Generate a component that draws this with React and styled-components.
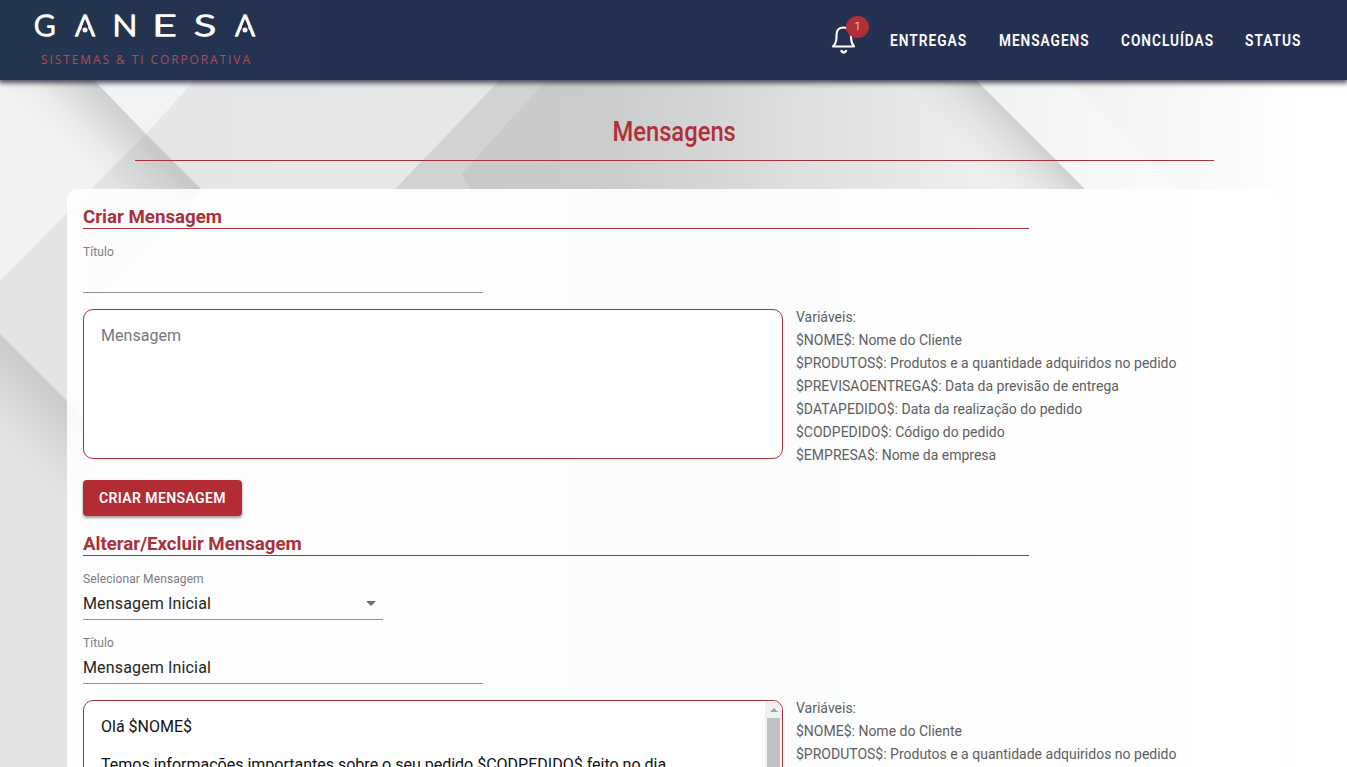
import React from "react";
import styled, { createGlobalStyle } from "styled-components";

const RED = "#a9313a";

const GlobalStyle = createGlobalStyle`
  * { box-sizing: border-box; }
  body { margin: 0; background: #fff; font-family: Roboto, sans-serif; }
  h1, h2, p { margin: 0; }
`;

const Page = styled.div`
  position: relative;
  height: 767px;
  overflow: hidden;
`;

const Backdrop = styled.svg`
  position: absolute;
  inset: 0;
`;

const Header = styled.header`
  position: relative;
  display: flex;
  align-items: center;
  justify-content: space-between;
  height: 80px;
  padding: 0 46px 0 30px;
  background: linear-gradient(90deg, #24364e 0%, #243350 12%, #253153 24%, #253154 100%);
  box-shadow: 0 2px 5px 1px rgba(20, 22, 50, 0.75);
`;

const Nav = styled.nav`
  display: flex;
  align-items: center;
  height: 80px;
`;

const NavLink = styled.a`
  width: ${(p) => p.$width}px;
  margin-left: ${(p) => p.$gap || 32}px;
  color: #fff;
  font-size: 17px;
  font-weight: 600;
  line-height: 24px;
  letter-spacing: 1.2px;
  white-space: nowrap;
`;

const Squeezed = styled.span`
  display: inline-block;
  transform: scaleX(${(p) => p.$ratio});
  transform-origin: ${(p) => p.$origin || "left"} center;
`;

const BellButton = styled.div`
  position: relative;
  width: 26px;
  height: 30px;
  svg { display: block; }
`;

const Badge = styled.span`
  position: absolute;
  left: 15px;
  top: -9px;
  width: 23px;
  height: 22px;
  border-radius: 50%;
  background: #b12f37;
  color: #fff;
  font-size: 11px;
  font-weight: 300;
  line-height: 22px;
  text-align: center;
`;

const Main = styled.main`
  position: relative;
`;

const Title = styled.h1`
  width: 1079px;
  height: 81px;
  margin: 0 auto 28px 135px;
  padding-top: 33px;
  border-bottom: 1px solid ${RED};
  color: #b12f37;
  font-size: 27px;
  font-weight: 500;
  line-height: 38px;
  text-align: center;
`;

const Card = styled.section`
  width: 1213px;
  height: 700px;
  margin-left: 67px;
  padding: 16px;
  border-radius: 10px;
  background: rgba(255, 255, 255, 0.9);
`;

const SectionTitle = styled.h2`
  width: 946px;
  height: 24px;
  border-bottom: 1px solid ${RED};
  color: #ac3039;
  font-size: 18.7px;
  font-weight: 700;
  line-height: 24px;
  letter-spacing: ${(p) => p.$spacing}px;
`;

const Field = styled.div`
  width: ${(p) => p.$width}px;
  height: 48px;
  margin: 16px 0;
  border-bottom: 1px solid #8f8d92;
`;

const Label = styled.div`
  color: #7d7c80;
  font-size: 12px;
  line-height: 14px;
  letter-spacing: 0.1px;
`;

const Value = styled.div`
  display: flex;
  justify-content: space-between;
  align-items: center;
  height: 33px;
  padding-top: 1px;
  color: #252528;
  font-size: 16px;
  letter-spacing: 0.15px;
`;

const Caret = styled.span`
  margin-right: 7px;
  border: 5px solid transparent;
  border-top-color: #6e6e70;
  border-bottom: 0;
`;

const EditorRow = styled.div`
  display: flex;
  gap: 13px;
  height: 150px;
`;

const Editor = styled.div`
  display: flex;
  justify-content: space-between;
  width: 700px;
  height: 150px;
  overflow: hidden;
  border: 1px solid ${RED};
  border-radius: 10px;
  background: #fff;
  color: ${(p) => (p.$placeholder ? "#77777b" : "#111")};
  font-size: 16px;
  line-height: 19px;
  letter-spacing: ${(p) => (p.$placeholder ? 0.05 : 0)}px;
`;

const EditorText = styled.div`
  padding: 16px 17px;
  white-space: pre;
`;

const Scrollbar = styled.div`
  display: flex;
  flex-direction: column;
  align-items: center;
  width: 17px;
  background: #f1f1f1;
`;

const ScrollUp = styled.span`
  margin: 7px 0 6px;
  border: 4px solid transparent;
  border-top: 0;
  border-bottom-color: #a0a0a0;
`;

const ScrollThumb = styled.span`
  width: 13px;
  height: 110px;
  background: #c1c1c1;
`;

const Variables = styled.div`
  padding-top: 3px;
  margin-top: -6px;
  color: #5f5f62;
  font-size: 14px;
  line-height: 23px;
  white-space: nowrap;
`;

const Button = styled.button`
  display: block;
  width: 159px;
  height: 36px;
  margin: 21px 0 16px;
  padding: 0;
  border: 0;
  border-radius: 4px;
  background: #b32c34;
  box-shadow: 0 2px 3px rgba(0, 0, 0, 0.38);
  color: #fff;
  font: 600 14px/34px Roboto, sans-serif;
  letter-spacing: 0.4px;
`;

const VARIABLES = [
  "Variáveis:",
  "$NOME$: Nome do Cliente",
  "$PRODUTOS$: Produtos e a quantidade adquiridos no pedido",
  "$PREVISAOENTREGA$: Data da previsão de entrega",
  "$DATAPEDIDO$: Data da realização do pedido",
  "$CODPEDIDO$: Código do pedido",
  "$EMPRESA$: Nome da empresa",
];

const MESSAGE = `Olá $NOME$

Temos informações importantes sobre o seu pedido $CODPEDIDO$ feito no dia`;

const WORDMARK = [
  ["G", 34, 21.5],
  ["A", 75.2, 19.6],
  ["N", 112.6, 24.8],
  ["E", 152.6, 24],
  ["S", 194, 22],
  ["A", 235.2, 19.6],
];

function VariableList({ lines = VARIABLES }) {
  return (
    <Variables>
      {lines.map((line) => <p key={line}>{line}</p>)}
    </Variables>
  );
}

function Logo() {
  return (
    <svg width="230" height="80" viewBox="30 0 230 80">
      <g fill="#fff" stroke="#fff" strokeWidth="1.7" strokeLinejoin="round" fontFamily="Lato" fontWeight="300" fontSize="29.5">
        {WORDMARK.map(([letter, x, width]) => (
          <text key={x} x={x} y="36" textLength={width} lengthAdjust="spacingAndGlyphs">{letter}</text>
        ))}
      </g>
      {[[85, "#243350"], [245, "#25324f"]].map(([x, fill]) => (
        <g key={x}>
          <path d={`M${x} 19.500L${x - 7.3} 38.500H${x + 7.3}Z`} fill={fill} />
          <circle cx={x} cy="30" r="2.5" fill="#fff" />
        </g>
      ))}
      <text x="41" y="63.500" fill="#b04a5c" fontFamily="Open Sans" fontWeight="400" fontSize="12" textLength="209">SISTEMAS &amp; TI CORPORATIVA</text>
    </svg>
  );
}

function Bell() {
  return (
    <svg width="26" height="30" viewBox="0 0 26 30" fill="none" stroke="#fff" strokeWidth="2.1" strokeLinecap="round" strokeLinejoin="round">
      <path d="M2 21.5H23C21 19 20 16 20 12V10C20 5 17 2.500 12.500 2.500S5.500 5 5.500 10V12C5.500 16 4.500 19 2 21.500Z" />
      <path d="M10.500 26Q12.700 29 15 26" strokeWidth="2.4" />
    </svg>
  );
}

function Background() {
  return (
    <Backdrop width="1347" height="767">
      <defs>
        <linearGradient id="base">
          <stop offset="0" stopColor="#e6e6e8" />
          <stop offset=".35" stopColor="#e7e8e8" />
          <stop offset=".5" stopColor="#dcdede" />
          <stop offset=".6" stopColor="#dfe1e1" />
          <stop offset=".72" stopColor="#eceded" />
          <stop offset=".88" stopColor="#f8f7f9" />
          <stop offset=".96" stopColor="#fff" />
        </linearGradient>
        <linearGradient id="pane" gradientUnits="userSpaceOnUse" x1="75" y1="160" x2="122" y2="112">
          <stop offset="0" stopColor="#f2f2f4" />
          <stop offset=".4" stopColor="#ebebec" />
          <stop offset="1" stopColor="#cfd0d1" />
        </linearGradient>
        <linearGradient id="fold" gradientUnits="userSpaceOnUse" x1="172" y1="160" x2="130" y2="202">
          <stop offset="0" stopColor="#c6c7c8" />
          <stop offset="1" stopColor="#e1e2e3" />
        </linearGradient>
        <linearGradient id="corner" gradientUnits="userSpaceOnUse" x1="35" y1="369" x2="-12" y2="416">
          <stop offset="0" stopColor="#c9cacb" />
          <stop offset="1" stopColor="#e3e3e5" />
        </linearGradient>
        <linearGradient id="dark" gradientUnits="userSpaceOnUse" x1="460" y1="0" x2="800" y2="0">
          <stop offset="0" stopColor="#c8caca" />
          <stop offset=".45" stopColor="#cbcdcd" />
          <stop offset="1" stopColor="#cbcdcd" stopOpacity="0" />
        </linearGradient>
        <linearGradient id="shade" gradientUnits="userSpaceOnUse" x1="1030" y1="134" x2="985" y2="179">
          <stop offset="0" stopColor="#cfd0d0" />
          <stop offset="1" stopColor="#e8e9e9" stopOpacity="0" />
        </linearGradient>
        <linearGradient id="light" x1="0" x2="1">
          <stop offset="0" stopColor="#f0f2f2" />
          <stop offset="1" stopColor="#fbfbfd" />
        </linearGradient>
      </defs>
      <rect width="1347" height="767" fill="url(#base)" />
      <path d="M0 80H94L146 134L0 281Z" fill="url(#pane)" />
      <path d="M94 80H195L146 134Z" fill="#f2f3f5" />
      <path d="M146 134L201 189L90 300L0 281Z" fill="url(#fold)" />
      <path d="M0 281L90 192V425L0 334Z" fill="#e4e4e6" />
      <path d="M0 334L90 424V767H0Z" fill="url(#corner)" />
      <path d="M500 80H546L461 174L470 189H395Z" fill="#d1d3d3" />
      <path d="M546 80H800V189H470L461 174Z" fill="url(#dark)" />
      <path d="M976 80L1085 189H850L900 80Z" fill="url(#shade)" />
      <path d="M976 80H1068L1177 189H1085Z" fill="url(#light)" />
    </Backdrop>
  );
}

export default function App() {
  return (
    <Page>
      <GlobalStyle />
      <Background />
      <Header>
        <Logo />
        <Nav>
          <BellButton><Bell /><Badge>1</Badge></BellButton>
          <NavLink $width={77} $gap={33}><Squeezed $ratio={0.81}>ENTREGAS</Squeezed></NavLink>
          <NavLink $width={90}><Squeezed $ratio={0.805}>MENSAGENS</Squeezed></NavLink>
          <NavLink $width={92}><Squeezed $ratio={0.805}>CONCLUÍDAS</Squeezed></NavLink>
          <NavLink $width={56}><Squeezed $ratio={0.81}>STATUS</Squeezed></NavLink>
        </Nav>
      </Header>
      <Main>
        <Title><Squeezed $ratio={0.88} $origin="center">Mensagens</Squeezed></Title>
        <Card>
          <SectionTitle $spacing={0}>Criar Mensagem</SectionTitle>
          <Field $width={400}>
            <Label>Título</Label>
          </Field>
          <EditorRow>
            <Editor $placeholder><EditorText>Mensagem</EditorText></Editor>
            <VariableList />
          </EditorRow>
          <Button>CRIAR MENSAGEM</Button>
          <SectionTitle $spacing={-0.02}>Alterar/Excluir Mensagem</SectionTitle>
          <Field $width={300}>
            <Label>Selecionar Mensagem</Label>
            <Value>Mensagem Inicial<Caret /></Value>
          </Field>
          <Field $width={400}>
            <Label>Título</Label>
            <Value>Mensagem Inicial</Value>
          </Field>
          <EditorRow>
            <Editor>
              <EditorText>{MESSAGE}</EditorText>
              <Scrollbar><ScrollUp /><ScrollThumb /></Scrollbar>
            </Editor>
            <VariableList lines={VARIABLES.slice(0, 3)} />
          </EditorRow>
        </Card>
      </Main>
    </Page>
  );
}
